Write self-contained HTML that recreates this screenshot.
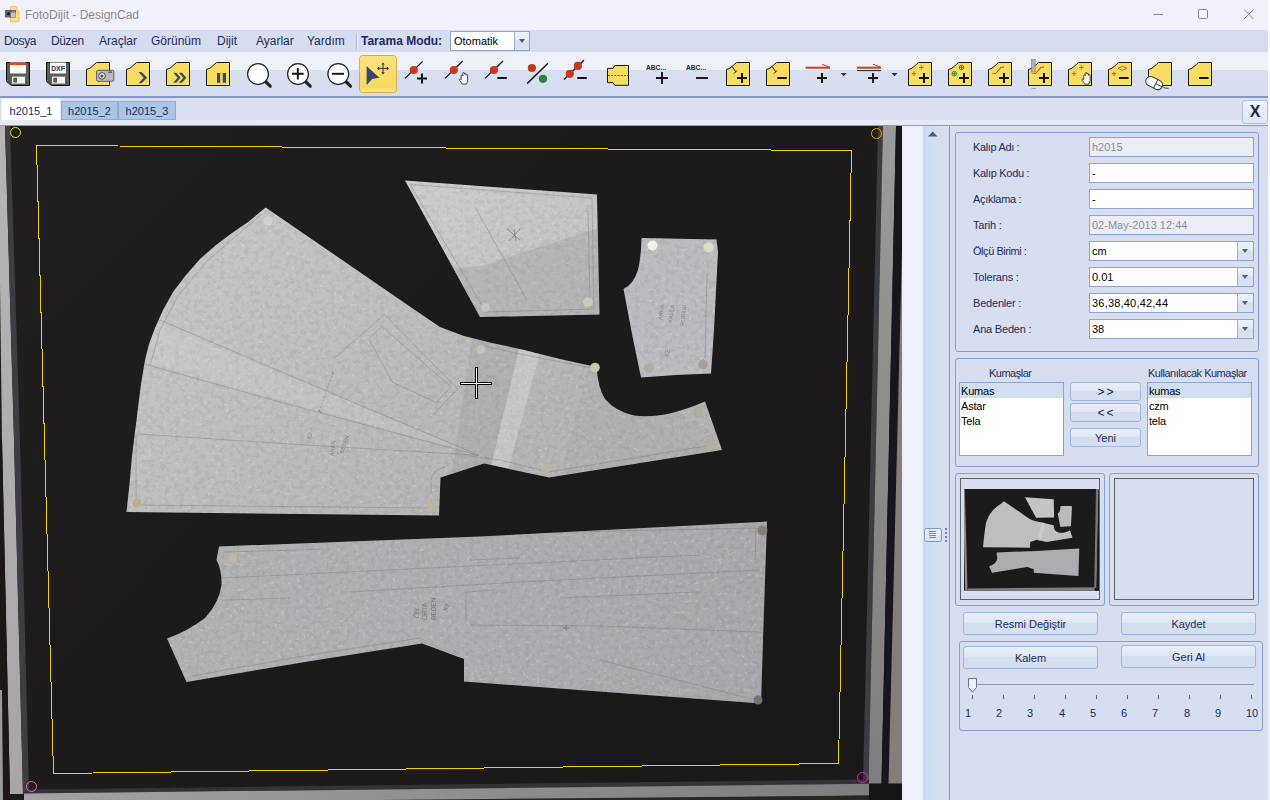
<!DOCTYPE html>
<html><head><meta charset="utf-8"><title>FotoDijit - DesignCad</title>
<style>
*{box-sizing:border-box}
html,body{margin:0;padding:0}
body{width:1270px;height:800px;overflow:hidden;position:relative;background:#d7def0;font-family:"Liberation Sans",sans-serif;font-size:11px;color:#1e2a5c}
.abs{position:absolute}
#title{left:0;top:0;width:1270px;height:30px;background:#f0f1fa}
#title .t{left:25px;top:8px;font-size:12px;color:#8b8b8b;white-space:nowrap}
#menu{left:0;top:30px;width:1270px;height:22px;background:#d6ddf0}
#menu span{position:absolute;top:4px;font-size:12px;color:#1e2a5c;white-space:nowrap}
#tb{left:0;top:52px;width:1270px;height:44px;background:linear-gradient(#eef0f8 0,#f0f2fa 18.5px,#d8dff0 18.5px,#d6ddf0 44px)}
#tbline{left:0;top:96px;width:1270px;height:2px;background:#8398c6}
#tabs{left:0;top:98px;width:1270px;height:27px;background:#d8dff0}
#tabline{left:0;top:125px;width:1268px;height:1px;background:#879dca}
.tab{position:absolute;font-size:11px;color:#1e2a5c;text-align:center;white-space:nowrap}
#rightedge{left:1268px;top:0;width:2px;height:800px;background:linear-gradient(#fbfbfe 0,#fbfbfe 130px,#eceff8 300px)}
#lav{left:902px;top:126px;width:21px;height:674px;background:#eeeff9}
#col{left:923px;top:126px;width:26px;height:674px;background:linear-gradient(90deg,#c9daee 0,#d0def0 8px,#d5dff0 15px,#d8dff0 26px)}
#colb{left:949px;top:126px;width:1px;height:674px;background:#8a9ecb}
#panel{left:950px;top:126px;width:317px;height:674px;background:#d7def0}
.gb{position:absolute;border:1px solid #899ecc;border-radius:3px}
.lbl{position:absolute;white-space:nowrap;font-size:11px;color:#1e2a5c;transform-origin:0 50%}
.inp{position:absolute;left:1089px;width:165px;height:20px;border:1px solid #8fa3cf;background:#fff;font-size:11px;color:#000;line-height:18px;padding-left:2px;white-space:nowrap;overflow:hidden}
.inp.dis{background:#ecedf8;color:#8e8e8e}
.cbb{position:absolute;right:0;top:0;width:16px;height:18px;border-left:1px solid #9db1d8;background:linear-gradient(#eef2fa 0,#e3ebf7 45%,#d5e0f1 50%,#d9e3f3 100%)}
.cbb:after{content:"";position:absolute;left:4px;top:7px;border:3.5px solid transparent;border-top:4px solid #555c76;border-bottom:0}
.btn{position:absolute;border:1px solid #9fb6dc;border-radius:3px;background:linear-gradient(#e9eef9 0,#dfe7f5 45%,#d3deef 50%,#d6e0f1 100%);font-size:11px;color:#1e2a5c;text-align:center;white-space:nowrap}
.list{position:absolute;border:1px solid #8fa3cf;background:#fff;font-size:11px;color:#000}
.list{padding-top:0}.list div{height:15px;line-height:16px;padding-left:1px;white-space:nowrap;letter-spacing:-.2px}
.list div.sel{background:#d0dff0}
</style></head><body>
<!-- TITLE -->
<div id="title" class="abs">
<svg class="abs" style="left:0;top:0" width="30" height="30" viewBox="0 0 30 30"><path d="M10.5 7.5Q10.5 6.4 12 6.4h3.5Q17 6.4 17 7.5v2.6l2 1.2V21.6H10.5z" fill="#fbdd80" stroke="#f3b555" stroke-width=".8"/><rect x="5" y="10" width="11" height="7.6" rx=".8" fill="#5b5b5b"/><rect x="11" y="12.3" width="4.6" height="4.8" fill="#c4c4c4"/><circle cx="8.4" cy="13.8" r="2.3" fill="#222" stroke="#9a9a9a" stroke-width=".7"/><rect x="12" y="10.6" width="3" height="1.2" fill="#8a8a8a"/></svg>
<span class="abs t">FotoDijit - DesignCad</span>
<svg class="abs" style="left:1140px;top:0" width="130" height="30" viewBox="0 0 130 30" fill="none" stroke="#8a8a8a" stroke-width="1"><path d="M13 14.5h10"/><rect x="58.5" y="9.5" width="9" height="9" rx="1"/><path d="M104 9.5l9.5 9.5M113.5 9.5l-9.5 9.5"/></svg>
</div>
<!-- MENU -->
<div id="menu" class="abs">
<span style="left:4px;letter-spacing:-.4px">Dosya</span><span style="left:51px;letter-spacing:-.4px">Düzen</span><span style="left:99px">Araçlar</span><span style="left:151px">Görünüm</span><span style="left:217px">Dijit</span><span style="left:256px">Ayarlar</span><span style="left:307px">Yardım</span>
<div class="abs" style="left:356px;top:3px;width:1px;height:16px;background:#a9b8d8"></div><div class="abs" style="left:357px;top:3px;width:1px;height:16px;background:#f4f6fb"></div>
<span style="left:361px;font-weight:bold">Tarama Modu:</span>
<div class="abs" style="left:450px;top:1px;width:80px;height:20px;border:1px solid #8fa3cf;background:#fff"><span style="left:3px;top:3px;font-size:11px;color:#000">Otomatik</span><div class="cbb" style="width:15px"></div></div>
</div>
<div id="tb" class="abs"></div>
<div id="tbline" class="abs"></div>
<div id="tabs" class="abs"></div>
<div id="tabline" class="abs"></div>
<div class="tab" style="left:1px;top:98px;width:60px;height:22px;background:#fff;border:1px solid #e4e9f5;border-bottom:0;line-height:24px">h2015_1</div>
<div class="tab" style="left:61px;top:101px;width:57px;height:19px;background:#aac5e5;border:1px solid #8fadd6;line-height:18px">h2015_2</div>
<div class="tab" style="left:118px;top:101px;width:58px;height:19px;background:#aac5e5;border:1px solid #8fadd6;line-height:18px">h2015_3</div>
<div class="abs" style="left:0;top:120px;width:1268px;height:5px;background:#e6eaf6"></div>
<div class="abs" style="left:1242px;top:100px;width:26px;height:24px;border:1px solid #a9c0e2;border-radius:3px;background:linear-gradient(#eef2fa,#dfe7f5);font-weight:bold;font-size:16px;line-height:22px;text-align:center;color:#1a2450">X</div>
<svg class="abs" style="left:0;top:126px" width="902" height="674" viewBox="0 126 902 674">
<defs>
<linearGradient id="bgg" gradientUnits="userSpaceOnUse" x1="100" y1="126" x2="800" y2="800"><stop offset="0" stop-color="#211e1f"/><stop offset=".4" stop-color="#1d1a1b"/><stop offset="1" stop-color="#1a1919"/></linearGradient>
<linearGradient id="pap" gradientUnits="userSpaceOnUse" x1="200" y1="200" x2="760" y2="700"><stop offset="0" stop-color="#c4c4c5"/><stop offset=".4" stop-color="#b8b8ba"/><stop offset=".7" stop-color="#adadb0"/><stop offset="1" stop-color="#a4a3a7"/></linearGradient>
<filter id="sp" x="0" y="0" width="100%" height="100%" color-interpolation-filters="sRGB"><feTurbulence type="fractalNoise" baseFrequency=".2" numOctaves="3" seed="11" result="n"/><feColorMatrix in="n" type="matrix" values="0 0 0 0 .3  0 0 0 0 .27  0 0 0 0 .28  7 0 0 0 -3.5" result="m"/><feComponentTransfer in="m" result="m2"><feFuncA type="linear" slope=".07"/></feComponentTransfer><feComposite in="m2" in2="SourceGraphic" operator="in" result="d"/><feTurbulence type="fractalNoise" baseFrequency=".27" numOctaves="3" seed="4" result="n2"/><feColorMatrix in="n2" type="matrix" values="0 0 0 0 1  0 0 0 0 1  0 0 0 0 1  0 12 0 0 -7.7" result="w"/><feComponentTransfer in="w" result="w2"><feFuncA type="linear" slope=".16"/></feComponentTransfer><feComposite in="w2" in2="SourceGraphic" operator="in" result="e"/><feMerge><feMergeNode in="SourceGraphic"/><feMergeNode in="d"/><feMergeNode in="e"/></feMerge></filter>
<linearGradient id="lst" x1="0" y1="0" x2="0" y2="1"><stop offset="0" stop-color="#b6b5b6"/><stop offset="1" stop-color="#a9a4a7"/></linearGradient>
<linearGradient id="rst" x1="0" y1="0" x2="0" y2="1"><stop offset="0" stop-color="#9c9b9b"/><stop offset=".5" stop-color="#8c8a88"/><stop offset="1" stop-color="#7f7f80"/></linearGradient>
<linearGradient id="bst" x1="0" y1="0" x2="1" y2="0"><stop offset="0" stop-color="#a3a2a5"/><stop offset=".5" stop-color="#8f8e91"/><stop offset="1" stop-color="#7e7d80"/></linearGradient>
<filter id="bl"><feGaussianBlur stdDeviation=".6"/></filter>
<filter id="bl2"><feGaussianBlur stdDeviation="1.5"/></filter>
</defs>
<rect x="0" y="126" width="902" height="674" fill="url(#bgg)"/>
<!-- whiteboard frame strips -->
<g filter="url(#bl)">
<polygon points="-2,126 5,126 14,440 23,794 10,794 2,440" fill="url(#lst)"/>
<polygon points="5,126 10,126 20,440 29,790 23,794 14,440" fill="#3c3c42"/>
<polygon points="0,440 2,440 10,794 10,800 0,800" fill="#1a1418"/>
<polygon points="0,690 2,690 3,800 0,800" fill="#9a9a9a"/>
<polygon points="878,126 883,126 868.5,784 863,784" fill="#3a3c40"/>
<polygon points="883,126 896,126 881.5,784 868.5,784" fill="url(#rst)"/>
<polygon points="896,126 902,126 902,260 888.5,784 881.5,784" fill="#15131a"/>
<polygon points="902,250 902,784 888.5,784" fill="#857d7b"/>
<polygon points="29,789.5 869,779.5 869,784 24,793.5" fill="#333338"/>
<polygon points="24,793.5 869,783.8 869,795.6 24,806" fill="url(#bst)"/>
<polygon points="380,800 869,795.6 869,800" fill="#2a2828"/>
<polygon points="869,783.5 902,783.5 902,800 869,800" fill="#151515"/>
</g>
<defs>
<clipPath id="c1"><path d="M265.7,207.5 L248,222 L232,233 L216,245 L200,259 L186,275 L173,292 L163,310 L155,328 L149,344 L145,360 L141,384 L138,408 L135,432 L132,456 L129.5,484 L126.5,512 L439,515.5 L440.5,477.5 L484,463.5 L549,477.5 L722,450 L705,401.5 Q690,408 672,413 Q650,418 634,415.5 Q615,411 605,399 Q598,388 596.5,367 L560,359 L520,349 L492,343 L464,336 L440,327 L412,308 L380,286 Z"/></clipPath><clipPath id="c2"><path d="M405,180.5 L597,194.5 L599.5,314.5 L480,317 Z"/></clipPath><clipPath id="c3"><path d="M641.5,238 L716.5,239.5 L718,252 L714,330 L711,373.5 Q676,374.5 641,377.5 L632,334 L623.5,289 Q633,285 638,270 Q641,258 641.5,238 Z"/></clipPath><clipPath id="c4"><path d="M219,546.5 L480,536.5 L767,521.5 L764,610 L761,703.5 L464,681.5 L464,659 L422,643.5 L311,661 L186.5,682 L167,638.5 Q188,631 205,618 Q219,603 221.5,585 Q222,570 216.5,560 Z"/></clipPath>
<linearGradient id="g1" gradientUnits="userSpaceOnUse" x1="230" y1="220" x2="480" y2="520"><stop offset="0" stop-color="#c5c5c5"/><stop offset=".5" stop-color="#bdbdbe"/><stop offset="1" stop-color="#b4b4b5"/></linearGradient>
<linearGradient id="g2" gradientUnits="userSpaceOnUse" x1="450" y1="180" x2="560" y2="320"><stop offset="0" stop-color="#cbcbcc"/><stop offset="1" stop-color="#c1c1c3"/></linearGradient>
<linearGradient id="g4" gradientUnits="userSpaceOnUse" x1="200" y1="560" x2="770" y2="640"><stop offset="0" stop-color="#b1b1b4"/><stop offset=".5" stop-color="#adadb1"/><stop offset="1" stop-color="#a9a7ab"/></linearGradient>
</defs>
<g filter="url(#sp)">
<path d="M265.7,207.5 L248,222 L232,233 L216,245 L200,259 L186,275 L173,292 L163,310 L155,328 L149,344 L145,360 L141,384 L138,408 L135,432 L132,456 L129.5,484 L126.5,512 L439,515.5 L440.5,477.5 L484,463.5 L549,477.5 L722,450 L705,401.5 Q690,408 672,413 Q650,418 634,415.5 Q615,411 605,399 Q598,388 596.5,367 L560,359 L520,349 L492,343 L464,336 L440,327 L412,308 L380,286 Z" fill="url(#g1)"/>
<path d="M405,180.5 L597,194.5 L599.5,314.5 L480,317 Z" fill="url(#g2)"/>
<path d="M641.5,238 L716.5,239.5 L718,252 L714,330 L711,373.5 Q676,374.5 641,377.5 L632,334 L623.5,289 Q633,285 638,270 Q641,258 641.5,238 Z" fill="#bcbcc0"/>
<path d="M219,546.5 L480,536.5 L767,521.5 L764,610 L761,703.5 L464,681.5 L464,659 L422,643.5 L311,661 L186.5,682 L167,638.5 Q188,631 205,618 Q219,603 221.5,585 Q222,570 216.5,560 Z" fill="url(#g4)"/>
</g>
<!-- shading -->
<g clip-path="url(#c2)"><path d="M481,266 L599,228 L600,316 L470,320 L450,268 Z" fill="#7d7d84" opacity=".2"/></g>
<g clip-path="url(#c1)">
<path d="M520,345 L540,352 L508,470 L490,470 Z" fill="#ffffff" opacity=".22"/>
<path d="M472,338 L520,345 L490,470 L452,472 Z" fill="#707078" opacity=".12"/>
<path d="M156,322 L146,362 L479,455.4 Z" fill="#ffffff" opacity=".09"/>
<path d="M590,360 L725,440 L725,455 L560,478 Z" fill="#707078" opacity=".07"/>
</g>
<!-- pencil lines -->
<g fill="none" stroke="#6c6c72" stroke-width=".8" opacity=".42">
<g clip-path="url(#c1)"><path d="M137,505 L432,508 M136,434 L136,506 M138,434 L290,444 L479,455.4 M144,364 L290,404.7 L479,455.4 M160,320 L290,375.5 L479,455.4 M262,214 L236,236 L206,262 L178,296 L160,330 L150,366"/>
<path d="M334,358.5 L384.5,314.5 L457.5,389 L433,415 M368.7,338.4 L382.2,327 L451,386.7 L436.2,402.5 L392.4,382.2 Z"/><path d="M332.7,373 L319.2,411.5" stroke="#9a4848" stroke-dasharray="2 1.5"/>
<path d="M445,467 Q432,470 431,480 L431,494 M470,456 L500,460 L549,472 L712,445 M592,368 L520,354 L480,345"/></g>
<path d="M410,184.5 L592,198 L594,309 L486,312 Z M475,207 L527,300 M588,210 L590,302"/>
<path d="M707,273 L705,358 M703,316 L709,316"/>
<g clip-path="url(#c4)"><path d="M224,552 L330,549 M222,578 L470,566 L700,555 M225,600 L290,598 M350,592 L520,582 L760,570 M192,676 L310,655 L420,638 M470,534 L760,528 M470,560 L520,558 M470,625 L600,626 L758,632 M560,598 L700,592 M600,660 L755,700 M466,592 L466,620 M466,592 L495,590 M756,530 L755,560"/></g>
</g>
<g fill="none" stroke="#55555c" stroke-width=".9" opacity=".6">
<path d="M318,410.5 L322,412.5 M332,372 L334,374 M337.6,452.4 L339.2,453.6 M507,229 L520,240 M520,229 L509,241 M514,229 L516,241"/>

<path d="M563,628 L569,628 M566,625 L566,631"/>
</g>
<g font-family="Liberation Sans" font-size="6.5" fill="#5c5c64" opacity=".65"><text transform="translate(662,320) rotate(-82)" font-size="5.5">ARKA</text><text transform="translate(672,323) rotate(-82)" font-size="5.5">KALÇA</text><text transform="translate(684,326) rotate(-84)" font-size="5.5">ROBASI</text><text transform="translate(668,358) rotate(-75)" font-size="6.5">X2</text><text transform="translate(311,440) rotate(-80)" font-size="6">X2</text><text transform="translate(334,456) rotate(-85)" font-size="5.5">ARKA</text><text transform="translate(343,454) rotate(-70)" font-size="5.5">BEDEN</text><text transform="translate(419,618) rotate(-90)">ÖN</text><text transform="translate(427,620) rotate(-90)">ORTA</text><text transform="translate(436,620) rotate(-90)">BEDEN</text><text transform="translate(447,612) rotate(-70)">X2</text></g>
<!-- pins -->
<g filter="url(#bl)">
<circle cx="268" cy="221" r="4.6" fill="#d0d0d0"/>
<circle cx="137" cy="503" r="4.5" fill="#b9b09a"/><circle cx="431" cy="506" r="4.5" fill="#bdb49c"/>
<circle cx="481" cy="349.5" r="4.5" fill="#c6c2b0"/><circle cx="595" cy="367.5" r="4.8" fill="#cbc6a4"/>
<circle cx="546" cy="468.5" r="4.8" fill="#b9b3a0"/><circle cx="698" cy="412.5" r="4.8" fill="#b3ab96"/><circle cx="710" cy="446" r="4.8" fill="#b5ad95"/>
<circle cx="485.5" cy="307.5" r="4.6" fill="#c4c4c6"/><circle cx="588" cy="302" r="4.8" fill="#cdcab6"/>
<circle cx="652.5" cy="245.5" r="5" fill="#f2f2ec"/><circle cx="708.5" cy="247.5" r="5" fill="#dedccb"/>
<circle cx="649" cy="368" r="4.8" fill="#b3aca4"/><circle cx="703" cy="364.5" r="4.8" fill="#a99c94"/>
<circle cx="232.5" cy="558" r="4.5" fill="#c4b69c"/><circle cx="194" cy="670" r="4.5" fill="#b4aaa0"/>
<circle cx="762.5" cy="530.5" r="5" fill="#8b7b73"/><circle cx="758" cy="700" r="4.5" fill="#74746c"/>
</g>

<polygon points="36.5,145.5 851.5,150.5 838.5,763.5 53.5,773.5" fill="none" stroke="#f5d000" stroke-width="1" shape-rendering="crispEdges"/>
<circle cx="15.5" cy="132.5" r="5" fill="none" stroke="#f0e010" stroke-width="1"/>
<circle cx="876.5" cy="133.5" r="5" fill="none" stroke="#f0a010" stroke-width="1"/>
<circle cx="31.5" cy="786.5" r="5" fill="none" stroke="#ee60b0" stroke-width="1"/>
<circle cx="862.5" cy="777.5" r="5" fill="none" stroke="#f010e0" stroke-width="1"/>
<path d="M460,383.5 H492 M476,367 V399" stroke="#000" stroke-width="3" fill="none" shape-rendering="crispEdges"/>
<path d="M461,383.5 H491 M476,368 V398" stroke="#fff" stroke-width="1" fill="none" shape-rendering="crispEdges"/>

</svg>

<svg class="abs" style="left:0;top:52px" width="1270" height="44" viewBox="0 52 1270 44" font-family="Liberation Sans">
<g transform="translate(6,62)"><path d="M.5 .5H23.5V23.5H5.5L.5 19.5Z" fill="#5b5b54" stroke="#111" stroke-width="1"/><rect x="4" y="0.5" width="16" height="11" fill="#fbfbfb"/><rect x="4" y=".5" width="16" height="2.6" fill="#d5501b"/><rect x="6" y="14.6" width="13" height="7" fill="#f4f4f4"/><rect x="7.3" y="15.7" width="3.7" height="4.8" fill="#5b5b54"/></g>
<g transform="translate(46,62)"><path d="M.5 .5H23.5V23.5H5.5L.5 19.5Z" fill="#5b5b54" stroke="#111" stroke-width="1"/><rect x="4" y="0.5" width="16" height="11" fill="#fbfbfb"/><text x="12" y="9" font-size="6.8" font-weight="bold" text-anchor="middle" fill="#333">DXF</text><rect x="6" y="14.6" width="13" height="7" fill="#f4f4f4"/><rect x="7.3" y="15.7" width="3.7" height="4.8" fill="#5b5b54"/></g>
<g transform="translate(86,62)"><path d="M10.5 .5H23.5V23.5H.5V7.4Q3.4 6.9 5 5.4L10.5 .5Z" fill="#f7de63" stroke="#161616" stroke-width="1"/><rect x="10.5" y="8.3" width="17.3" height="11" rx="1.5" fill="#b9b9b9" stroke="#555" stroke-width=".9"/><circle cx="16" cy="13.9" r="3.3" fill="#fff" stroke="#444" stroke-width="1"/><circle cx="16" cy="13.9" r="1.5" fill="#444"/><rect x="22.3" y="9.6" width="3.6" height="1" fill="#333"/></g>
<g transform="translate(126,62)"><path d="M10.5 .5H23.5V23.5H.5V7.4Q3.4 6.9 5 5.4L10.5 .5Z" fill="#f7de63" stroke="#161616" stroke-width="1"/><path d="M12.6 10H15.7L21.2 15.7L15.7 21.2H12.6L17.6 15.7Z" fill="#3b4a63"/></g>
<g transform="translate(166,62)"><path d="M10.5 .5H23.5V23.5H.5V7.4Q3.4 6.9 5 5.4L10.5 .5Z" fill="#f7de63" stroke="#161616" stroke-width="1"/><path d="M7.2 10.7H10.3L14.7 15.7L10.3 20.8H7.2L11.6 15.7Z" fill="#3b4a63"/><path d="M12.8 10.7H16L20.4 15.7L16 20.8H12.8L17.3 15.7Z" fill="#3b4a63"/></g>
<g transform="translate(206,62)"><path d="M10.5 .5H23.5V23.5H.5V7.4Q3.4 6.9 5 5.4L10.5 .5Z" fill="#f7de63" stroke="#161616" stroke-width="1"/><rect x="11" y="11" width="3.2" height="9.8" fill="#3b4a63"/><rect x="16.7" y="11" width="3.3" height="9.8" fill="#3b4a63"/></g>
<path d="M265.5 81.5L270.2 86.2" stroke="#222" stroke-width="3.2" stroke-linecap="round"/><circle cx="258" cy="74" r="10.4" fill="#fff" stroke="#222" stroke-width="1.2"/>
<path d="M305.5 81.5L310.2 86.2" stroke="#222" stroke-width="3.2" stroke-linecap="round"/><circle cx="298" cy="74" r="10.4" fill="#fff" stroke="#222" stroke-width="1.2"/><path d="M292.0 73.7H303.6M297.8 67.9V79.5" stroke="#111" stroke-width="1.9" fill="none"/>
<path d="M345.8 81.5L350.5 86.2" stroke="#222" stroke-width="3.2" stroke-linecap="round"/><circle cx="338.3" cy="74" r="10.4" fill="#fff" stroke="#222" stroke-width="1.2"/><path d="M332 73.8H344" stroke="#111" stroke-width="1.9" fill="none"/>
<defs><linearGradient id="selg" x1="0" y1="0" x2="0" y2="1"><stop offset="0" stop-color="#fde280"/><stop offset=".85" stop-color="#f8d961"/><stop offset="1" stop-color="#fce98c"/></linearGradient></defs>
<rect x="359.5" y="55.5" width="37" height="37" rx="3" fill="url(#selg)" stroke="#d8ae48" stroke-width="1"/>
<path d="M366.6 66.1L379.4 77.8L372.3 79L366.6 84.9Z" fill="#3a4a64"/>
<path d="M378 68.4H388M383 63.4V73.4" stroke="#333" stroke-width="1" fill="none"/><path d="M383 62.4l-1.8 2.2h3.6zM383 74.4l-1.8-2.2h3.6zM377 68.4l2.2-1.8v3.6zM389 68.4l-2.2-1.8v3.6z" fill="#333"/>
<path d="M405 78.4L422.6 61.4" stroke="#111" stroke-width="1.3"/><circle cx="413.8" cy="70" r="4.1" fill="#c9361a"/><path d="M417 78.4H427M422 73.4V83.4" stroke="#111" stroke-width="2" fill="none"/>
<path d="M445 78.4L462.7 61" stroke="#111" stroke-width="1.3"/><circle cx="453.8" cy="70" r="4.1" fill="#c9361a"/><g transform="translate(459,74.5)"><path d="M2.2 5.2V1.3Q2.2 .4 3 .4T3.8 1.3V-1.2Q3.8 -2 4.6 -2T5.4 -1.2V-.2Q5.4 -1 6.2 -1T7 -.2V.8Q7 0 7.8 0T8.6 .9V5.5Q8.6 8 7.4 9.6H3.2Q2.4 8 .9 6.2Q0 5 .7 4.6T2.2 5.2Z" fill="#fff" stroke="#222" stroke-width=".8"/></g>
<path d="M485 78.4L503 61" stroke="#111" stroke-width="1.3"/><circle cx="493.9" cy="70" r="4.1" fill="#c9361a"/><path d="M497.3 78H506.8" stroke="#111" stroke-width="2" fill="none"/>
<path d="M527.2 83.5L548 63.3" stroke="#111" stroke-width="1.5"/><circle cx="531.9" cy="68" r="4.1" fill="#c9361a"/><circle cx="543" cy="78.8" r="4.1" fill="#1f8a3c"/>
<path d="M564 79.5L583.9 60.2" stroke="#111" stroke-width="1.3"/><circle cx="577.9" cy="65.9" r="4.1" fill="#c9361a"/><circle cx="569.8" cy="73.8" r="4.1" fill="#c9361a"/><path d="M577.2 78H586.8" stroke="#111" stroke-width="2" fill="none"/>
<path d="M614.8 65.5H628.5V85.3H614.8L612.9 82.6H607.5V68.4H612.9Z" fill="#f7de63" stroke="#161616" stroke-width="1"/><path d="M608 75.5H628" stroke="#d0381c" stroke-width="1" stroke-dasharray="2 1.2"/>
<text x="646" y="70" font-size="6.3" font-weight="bold" fill="#222" textLength="20" lengthAdjust="spacingAndGlyphs">ABC...</text><path d="M656 78H668M662 72V84" stroke="#111" stroke-width="1.9" fill="none"/>
<text x="686" y="70" font-size="6.3" font-weight="bold" fill="#222" textLength="20" lengthAdjust="spacingAndGlyphs">ABC...</text><path d="M696 78H708" stroke="#111" stroke-width="1.9" fill="none"/>
<g transform="translate(726,62)"><path d="M10.5 .5H23.5V23.5H.5V7.4Q3.4 6.9 5 5.4L10.5 .5Z" fill="#f7de63" stroke="#161616" stroke-width="1"/><path d="M6 4.5L10 10M8 11.5L11 8.5" stroke="#222" stroke-width="1" fill="none"/><path d="M11 16H21M16 11V21" stroke="#111" stroke-width="2" fill="none"/></g>
<g transform="translate(766,62)"><path d="M10.5 .5H23.5V23.5H.5V7.4Q3.4 6.9 5 5.4L10.5 .5Z" fill="#f7de63" stroke="#161616" stroke-width="1"/><path d="M6 4.5L10 10M8 11.5L11 8.5" stroke="#222" stroke-width="1" fill="none"/><path d="M11.3 16H20.8" stroke="#111" stroke-width="2" fill="none"/></g>
<path d="M805.7 67.7H830" stroke="#cc3f1c" stroke-width="2"/><path d="M822 64.3L830 67.3" stroke="#cc3f1c" stroke-width="1"/><path d="M817 78H827M822 73V83" stroke="#111" stroke-width="2" fill="none"/><path d="M840.7 73H846.7L843.7 76.2Z" fill="#1f2d50"/>
<path d="M857 67.7H881" stroke="#cc3f1c" stroke-width="2"/><path d="M873 64.3L881 67.3" stroke="#cc3f1c" stroke-width="1"/><path d="M857 70.6H881" stroke="#222" stroke-width="1"/><path d="M868 78H878M873 73V83" stroke="#111" stroke-width="2" fill="none"/><path d="M891.5 73H897.5L894.5 76.2Z" fill="#1f2d50"/>
<g transform="translate(908,62)"><path d="M10.5 .5H23.5V23.5H.5V7.4Q3.4 6.9 5 5.4L10.5 .5Z" fill="#f7de63" stroke="#161616" stroke-width="1"/><path d="M11.0 5.5H15.600000000000001M13.3 3.2V7.8" stroke="#e0521e" stroke-width="1" fill="none"/><path d="M3.7 11.7H8.3M6 9.399999999999999V14.0" stroke="#e0521e" stroke-width="1" fill="none"/><path d="M11 16H21M16 11V21" stroke="#111" stroke-width="2" fill="none"/></g>
<g transform="translate(948,62)"><path d="M10.5 .5H23.5V23.5H.5V7.4Q3.4 6.9 5 5.4L10.5 .5Z" fill="#f7de63" stroke="#161616" stroke-width="1"/><circle cx="13.5" cy="5.5" r="2.3" fill="none" stroke="#1f8a3c" stroke-width=".9"/><path d="M11.2 5.5H15.8M13.5 3.2V7.8" stroke="#1f8a3c" stroke-width="0.9" fill="none"/><circle cx="6.3" cy="11.7" r="2.3" fill="none" stroke="#1f8a3c" stroke-width=".9"/><path d="M4.0 11.7H8.6M6.3 9.399999999999999V14.0" stroke="#1f8a3c" stroke-width="0.9" fill="none"/><path d="M11 16H21M16 11V21" stroke="#111" stroke-width="2" fill="none"/></g>
<g transform="translate(988,62)"><path d="M10.5 .5H23.5V23.5H.5V7.4Q3.4 6.9 5 5.4L10.5 .5Z" fill="#f7de63" stroke="#161616" stroke-width="1"/><path d="M4.5 11.5H7.5L13 5.3H16" stroke="#e0521e" stroke-width="1.1" fill="none"/><path d="M11 16H21M16 11V21" stroke="#111" stroke-width="2" fill="none"/></g>
<g transform="translate(1028,62)"><path d="M10.5 .5H23.5V23.5H.5V7.4Q3.4 6.9 5 5.4L10.5 .5Z" fill="#f7de63" stroke="#161616" stroke-width="1"/><path d="M4.5 11.5H7.5L13 5.3H16" stroke="#e0521e" stroke-width="1.1" fill="none"/><rect x="3.5" y="-2.5" width="3.6" height="12.5" fill="#b4b4b4" stroke="#777" stroke-width=".6"/><path d="M3.5 26.5H8" stroke="#9aa" stroke-width="1"/><path d="M11 16H21M16 11V21" stroke="#111" stroke-width="2" fill="none"/></g>
<g transform="translate(1068,62)"><path d="M10.5 .5H23.5V23.5H.5V7.4Q3.4 6.9 5 5.4L10.5 .5Z" fill="#f7de63" stroke="#161616" stroke-width="1"/><path d="M11.0 5.5H15.600000000000001M13.3 3.2V7.8" stroke="#e0521e" stroke-width="1" fill="none"/><path d="M3.7 11.7H8.3M6 9.399999999999999V14.0" stroke="#e0521e" stroke-width="1" fill="none"/><g transform="translate(13.5,12.5)"><path d="M2.2 5.2V1.3Q2.2 .4 3 .4T3.8 1.3V-1.2Q3.8 -2 4.6 -2T5.4 -1.2V-.2Q5.4 -1 6.2 -1T7 -.2V.8Q7 0 7.8 0T8.6 .9V5.5Q8.6 8 7.4 9.6H3.2Q2.4 8 .9 6.2Q0 5 .7 4.6T2.2 5.2Z" fill="#fff" stroke="#222" stroke-width=".8"/></g></g>
<g transform="translate(1108,62)"><path d="M10.5 .5H23.5V23.5H.5V7.4Q3.4 6.9 5 5.4L10.5 .5Z" fill="#f7de63" stroke="#161616" stroke-width="1"/><path d="M10 6.3L14.5 4.3L19 6.3L14.5 8.3Z" stroke="#e0521e" stroke-width=".9" fill="none"/><path d="M3.7 11.7H8.3M6 9.399999999999999V14.0" stroke="#e0521e" stroke-width="1" fill="none"/><path d="M11 16H20.5" stroke="#111" stroke-width="2" fill="none"/></g>
<g transform="translate(1148,62)"><path d="M10.5 .5H23.5V23.5H.5V7.4Q3.4 6.9 5 5.4L10.5 .5Z" fill="#f7de63" stroke="#161616" stroke-width="1"/><g transform="translate(0.5,12.8) rotate(27)"><rect x="0" y="0" width="17.5" height="9.6" rx="4.6" fill="#fff" stroke="#222" stroke-width=".9"/><path d="M10.5 0V9.6M10.5 4.6H17.5" stroke="#222" stroke-width=".8" fill="none"/></g><path d="M14.5 24.3Q16.5 26.8 20.5 26.3" stroke="#222" stroke-width=".8" fill="none"/></g>
<g transform="translate(1188,62)"><path d="M10.5 .5H23.5V23.5H.5V7.4Q3.4 6.9 5 5.4L10.5 .5Z" fill="#f7de63" stroke="#161616" stroke-width="1"/><path d="M11 16H20.5" stroke="#111" stroke-width="2" fill="none"/></g>
</svg>

<div id="lav" class="abs"></div><div id="col" class="abs"></div><div id="colb" class="abs"></div>
<div id="panel" class="abs"></div>
<div class="gb" style="left:955px;top:132px;width:304px;height:220px"></div>
<span class="lbl" style="left:973px;top:141px;letter-spacing:-0.35px">Kalıp Adı :</span><div class="inp dis" style="top:137px">h2015</div>
<span class="lbl" style="left:973px;top:167px;letter-spacing:-0.3px">Kalıp Kodu :</span><div class="inp" style="top:163px">-</div>
<span class="lbl" style="left:973px;top:193px;letter-spacing:-0.3px">Açıklama :</span><div class="inp" style="top:189px">-</div>
<span class="lbl" style="left:973px;top:219px;letter-spacing:-0.2px">Tarih :</span><div class="inp dis" style="top:215px">02-May-2013 12:44</div>
<span class="lbl" style="left:973px;top:245px;letter-spacing:-0.45px">Ölçü Birimi :</span><div class="inp" style="top:241px">cm<div class="cbb"></div></div>
<span class="lbl" style="left:973px;top:271px;letter-spacing:-0.2px">Tolerans :</span><div class="inp" style="top:267px">0.01<div class="cbb"></div></div>
<span class="lbl" style="left:973px;top:297px;letter-spacing:-0.2px">Bedenler :</span><div class="inp" style="top:293px;letter-spacing:.2px">36,38,40,42,44<div class="cbb"></div></div>
<span class="lbl" style="left:973px;top:323px;letter-spacing:-0.2px">Ana Beden :</span><div class="inp" style="top:319px">38<div class="cbb"></div></div>
<div class="gb" style="left:955px;top:358px;width:304px;height:109px"></div>
<span class="lbl" style="left:989px;top:367px;letter-spacing:-0.5px">Kumaşlar</span>
<span class="lbl" style="left:1148px;top:367px;letter-spacing:-0.48px">Kullanılacak Kumaşlar</span>
<div class="list" style="left:959px;top:382px;width:105px;height:74px"><div class="sel">Kumas</div><div>Astar</div><div>Tela</div></div>
<div class="list" style="left:1147px;top:382px;width:105px;height:74px"><div class="sel">kumas</div><div>czm</div><div>tela</div></div>
<div class="btn" style="left:1070px;top:382px;width:71px;height:19px;line-height:18px;font-size:12px;letter-spacing:2px;text-indent:2px;color:#111a40">&gt;&gt;</div>
<div class="btn" style="left:1070px;top:403px;width:71px;height:19px;line-height:18px;font-size:12px;letter-spacing:2px;text-indent:2px;color:#111a40">&lt;&lt;</div>
<div class="btn" style="left:1070px;top:428px;width:71px;height:19px;line-height:18px">Yeni</div>
<div class="gb" style="left:955px;top:473px;width:150px;height:133px"></div>
<div class="abs" style="left:960px;top:478px;width:140px;height:122px;border:1px solid #5f6168"></div>
<div class="gb" style="left:1109px;top:473px;width:150px;height:133px"></div>
<div class="abs" style="left:1114px;top:478px;width:140px;height:122px;border:1px solid #5f6168"></div>
<svg class="abs" style="left:963.5px;top:489px" width="135.6" height="101.6" viewBox="0 126 902 674" preserveAspectRatio="none">
<rect x="0" y="126" width="902" height="674" fill="#1d1a1b"/>
<polygon points="-2,126 5,126 14,440 23,793 23,800 8,800 0,440" fill="#8d8b8c"/>
<polygon points="878,126 896,126 881.5,800 866,800" fill="#77767a"/>
<polygon points="896,126 902,126 902,800 881.5,800" fill="#1a181c"/>
<polygon points="24,786 869,778 869,800 24,800" fill="#7e7d80"/>
<polygon points="869,783 902,783 902,800 869,800" fill="#151515"/>
<path d="M265.7,207.5 L248,222 L232,233 L216,245 L200,259 L186,275 L173,292 L163,310 L155,328 L149,344 L145,360 L141,384 L138,408 L135,432 L132,456 L129.5,484 L126.5,512 L439,515.5 L440.5,477.5 L484,463.5 L549,477.5 L722,450 L705,401.5 Q690,408 672,413 Q650,418 634,415.5 Q615,411 605,399 Q598,388 596.5,367 L560,359 L520,349 L492,343 L464,336 L440,327 L412,308 L380,286 Z" fill="#bfbfc1"/><path d="M405,180.5 L597,194.5 L599.5,314.5 L480,317 Z" fill="#c4c4c6"/><path d="M641.5,238 L716.5,239.5 L718,252 L714,330 L711,373.5 Q676,374.5 641,377.5 L632,334 L623.5,289 Q633,285 638,270 Q641,258 641.5,238 Z" fill="#b9b9bd"/><path d="M219,546.5 L480,536.5 L767,521.5 L764,610 L761,703.5 L464,681.5 L464,659 L422,643.5 L311,661 L186.5,682 L167,638.5 Q188,631 205,618 Q219,603 221.5,585 Q222,570 216.5,560 Z" fill="#adadb1"/>
<path d="M520,345 L540,352 L508,470 L490,470 Z" fill="#ffffff" opacity=".2"/>
</svg>

<div class="btn" style="left:963px;top:612px;width:135px;height:23px;line-height:22px">Resmi Değiştir</div>
<div class="btn" style="left:1121px;top:612px;width:135px;height:23px;line-height:22px">Kaydet</div>
<div class="gb" style="left:959px;top:641px;width:304px;height:90px"></div>
<div class="btn" style="left:963px;top:646px;width:135px;height:23px;line-height:22px">Kalem</div>
<div class="btn" style="left:1121px;top:645px;width:135px;height:23px;line-height:22px">Geri Al</div>
<div class="abs" style="left:976px;top:684px;width:278px;height:1px;background:#8e99b5"></div>
<svg class="abs" style="left:967px;top:677px" width="12" height="17" viewBox="0 0 12 17"><path d="M1.5 1.5h8v9l-4 4.5l-4-4.5z" fill="#eef1f8" stroke="#6f7890" stroke-width="1"/></svg>
<svg class="abs" style="left:960px;top:694px" width="300" height="6" viewBox="0 0 300 6" stroke="#5c6684" stroke-width="1"><path d="M12.5 1v4M43.5 1v4M74.5 1v4M105.5 1v4M136.5 1v4M167.5 1v4M198.5 1v4M229.5 1v4M260.5 1v4M291.5 1v4"/></svg>
<span class="lbl" style="left:965px;top:707px">1</span><span class="lbl" style="left:996px;top:707px">2</span><span class="lbl" style="left:1027px;top:707px">3</span><span class="lbl" style="left:1059px;top:707px">4</span><span class="lbl" style="left:1090px;top:707px">5</span><span class="lbl" style="left:1121px;top:707px">6</span><span class="lbl" style="left:1152px;top:707px">7</span><span class="lbl" style="left:1184px;top:707px">8</span><span class="lbl" style="left:1215px;top:707px">9</span><span class="lbl" style="left:1246px;top:707px">10</span>
<!-- column widgets -->
<svg class="abs" style="left:927px;top:130px" width="12" height="8" viewBox="0 0 12 8"><path d="M1 6.5L5.7 1.5L10.5 6.5z" fill="#4f5876"/></svg>
<div class="abs" style="left:924px;top:528px;width:18px;height:14px;border:1px solid #8298c4;border-radius:2.5px;background:linear-gradient(#e9eef9,#d9e2f2)"></div>
<svg class="abs" style="left:924px;top:526px" width="26" height="18" viewBox="924 526 26 18" shape-rendering="crispEdges"><path d="M929 531.5h7M929 533.5h7M929 535.5h7M929 537.5h7" stroke="#7688be" stroke-width="1"/><rect x="945" y="528" width="2" height="2" fill="#7080b6"/><rect x="945" y="532" width="2" height="2" fill="#7080b6"/><rect x="945" y="536" width="2" height="2" fill="#7080b6"/><rect x="945" y="540" width="2" height="2" fill="#7080b6"/></svg>

<div id="rightedge" class="abs"></div>
</body></html>
